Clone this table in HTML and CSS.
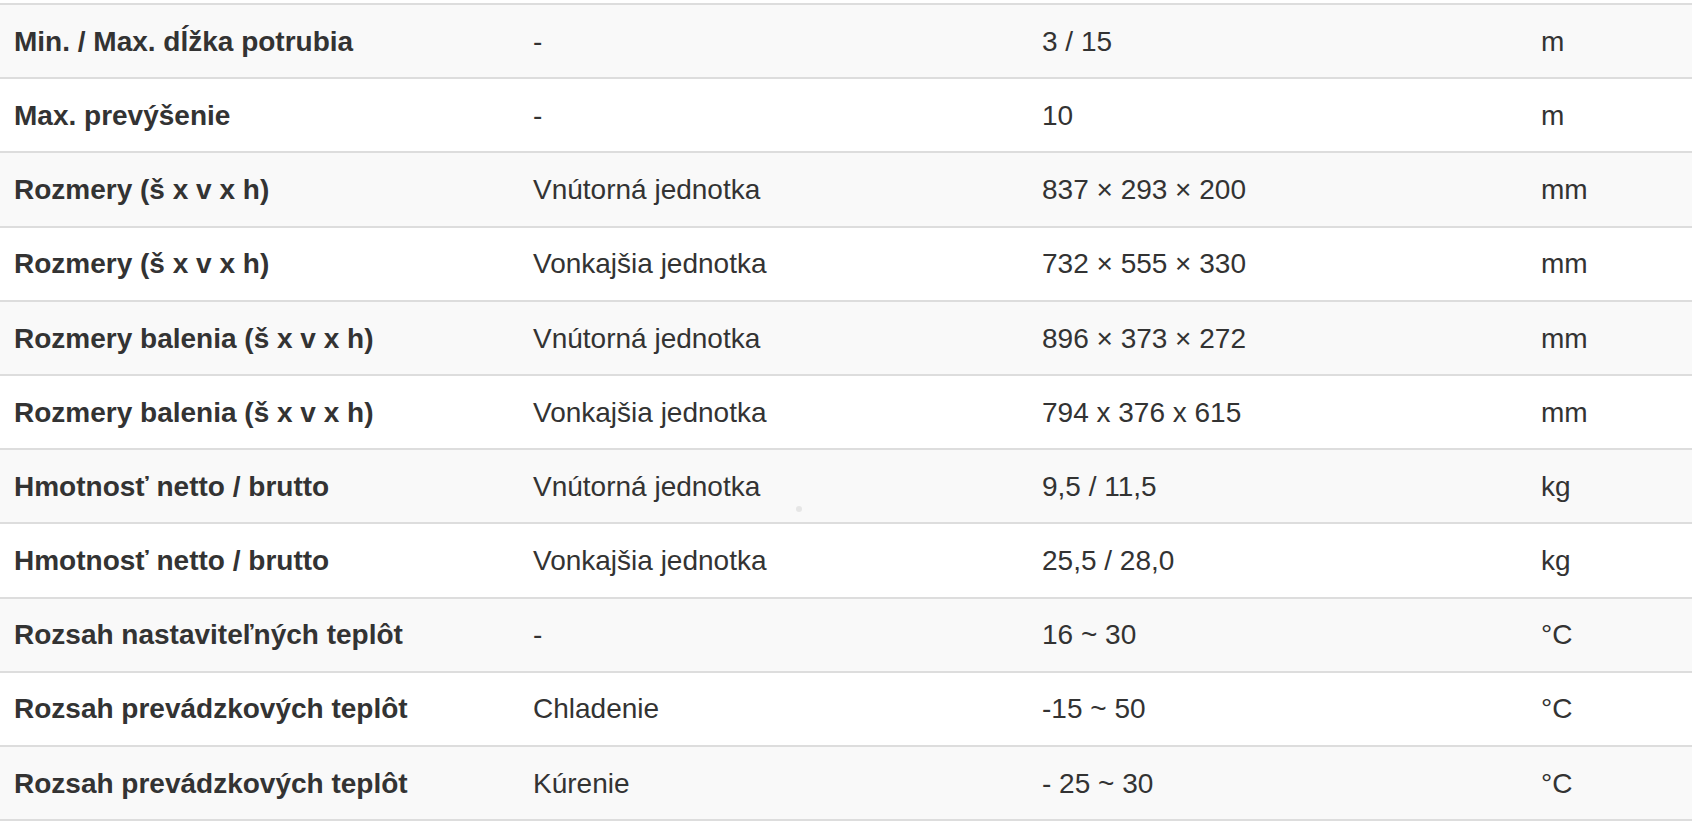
FILE: index.html
```html
<!DOCTYPE html>
<html lang="sk">
<head>
<meta charset="utf-8">
<title>Parametre</title>
<link rel="stylesheet" href="styles.css">
</head>
<body>
<div class="wrap">
<table class="spec">
<colgroup>
<col class="c1"><col class="c2"><col class="c3"><col class="c4">
</colgroup>
<tbody>
<tr><th>Min. / Max. dĺžka potrubia</th><td>-</td><td>3 / 15</td><td>m</td></tr>
<tr><th>Max. prevýšenie</th><td>-</td><td>10</td><td>m</td></tr>
<tr><th>Rozmery (š x v x h)</th><td>Vnútorná jednotka</td><td>837 × 293 × 200</td><td>mm</td></tr>
<tr><th>Rozmery (š x v x h)</th><td>Vonkajšia jednotka</td><td>732 × 555 × 330</td><td>mm</td></tr>
<tr><th>Rozmery balenia (š x v x h)</th><td>Vnútorná jednotka</td><td>896 × 373 × 272</td><td>mm</td></tr>
<tr><th>Rozmery balenia (š x v x h)</th><td>Vonkajšia jednotka</td><td>794 x 376 x 615</td><td>mm</td></tr>
<tr><th>Hmotnosť netto / brutto</th><td>Vnútorná jednotka</td><td>9,5 / 11,5</td><td>kg</td></tr>
<tr><th>Hmotnosť netto / brutto</th><td>Vonkajšia jednotka</td><td>25,5 / 28,0</td><td>kg</td></tr>
<tr><th>Rozsah nastaviteľných teplôt</th><td>-</td><td>16 ~ 30</td><td>°C</td></tr>
<tr><th>Rozsah prevádzkových teplôt</th><td>Chladenie</td><td>-15 ~ 50</td><td>°C</td></tr>
<tr><th>Rozsah prevádzkových teplôt</th><td>Kúrenie</td><td>- 25 ~ 30</td><td>°C</td></tr>
</tbody>
</table>
<span class="dot"></span>
</div>
</body>
</html>
```
FILE: styles.css
```css
html, body {
  margin: 0;
  padding: 0;
  background: #fff;
}
body {
  font-family: "Liberation Sans", Arial, Helvetica, sans-serif;
  color: #333;
  font-size: 28px;
}
.wrap {
  position: relative;
  padding-top: 3px;
}
.spec {
  width: 100%;
  border-collapse: collapse;
  border-spacing: 0;
  table-layout: fixed;
  border-bottom: 2px solid #ddd;
}
.c1 { width: 519px; }
.c2 { width: 509px; }
.c3 { width: 499px; }
.spec th,
.spec td {
  text-align: left;
  vertical-align: top;
  line-height: 40px;
  padding: 16.8px 13px 15.4px 14px;
  border-top: 2px solid #ddd;
  white-space: nowrap;
}
.spec th {
  font-weight: bold;
}
.spec td {
  font-weight: normal;
}
.spec tbody tr:nth-child(odd) {
  background: #f9f9f9;
}
.dot {
  position: absolute;
  left: 796px;
  top: 506px;
  width: 6px;
  height: 6px;
  border-radius: 50%;
  background: #e6e6e6;
}
```
